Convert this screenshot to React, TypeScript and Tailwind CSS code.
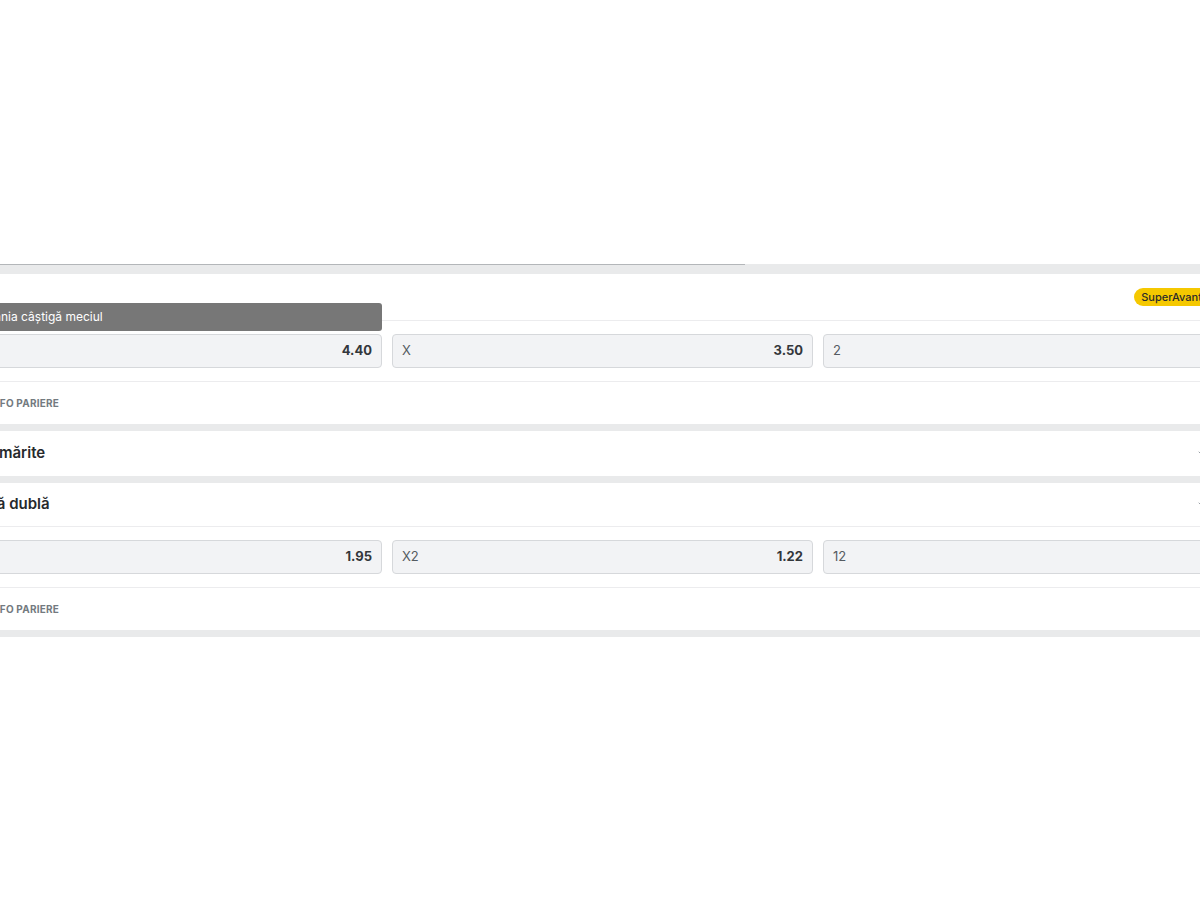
import { ChevronDown, Info } from "lucide-react";

type Odd = { label: string; value: string };

function OddButton({ odd }: { odd: Odd }) {
  return (
    <button className="flex h-[34px] items-center justify-between rounded-[4px] border border-[#d6d8db] bg-[#f2f3f5] px-[9px] text-[13px]">
      <span className="text-[#555b61]">{odd.label}</span>
      <span className="font-bold text-[#33373b]">{odd.value}</span>
    </button>
  );
}

function MarketCard({
  title,
  odds,
  badge,
  tooltip,
  open = true,
  headerHeight = "h-[43px]",
}: {
  title: string;
  odds?: Odd[];
  badge?: string;
  tooltip?: string;
  open?: boolean;
  headerHeight?: string;
}) {
  return (
    <section className="bg-white">
      <div className={`flex items-center justify-between px-3 ${headerHeight}`}>
        <h3 className="text-[15px] font-semibold text-[#26292c]">{title}</h3>
        <div className="flex items-center">
          {badge && (
            <span className="mr-[26px] rounded-full bg-[#f5c800] px-[7px] py-[1px] text-[11px] font-medium text-[#2b2b2b]">
              {badge}
            </span>
          )}
          {!badge && <ChevronDown size={16} strokeWidth={1.5} className="mr-[33px] text-[#9aa0a6]" />}
        </div>
      </div>
      {open && odds && (
        <>
          <div className="relative border-t border-[#ececee] px-3 pt-[13px] pb-[13px]">
            {tooltip && (
              <div className="absolute bottom-[calc(100%-10px)] left-3 w-[421px] rounded-[3px] bg-[#777777] px-2 py-[5px] text-[12px] text-white">
                {tooltip}
              </div>
            )}
            <div className="grid grid-cols-3 gap-[10px]">
              {odds.map((o) => (
                <OddButton key={o.label} odd={o} />
              ))}
            </div>
          </div>
          <div className="flex h-[43px] items-center gap-3 border-t border-[#ececee] px-3">
            <Info size={16} className="text-[#7c8288]" />
            <span className="text-[10px] font-bold uppercase tracking-[0.2px] text-[#737a80]">
              Info pariere
            </span>
          </div>
        </>
      )}
    </section>
  );
}

export default function App() {
  return (
    <div className="min-h-[900px] overflow-hidden bg-white font-['Inter','Liberation_Sans',sans-serif]">
      <div className="h-[264px] bg-white" />
      <div className="h-[10px] bg-[#e9eaeb]">
        <div className="h-px w-[745px] bg-[#b3b6b9]" />
      </div>
      <div className="-ml-[51px] w-[1307px]">
        <MarketCard
          title=""
          badge="SuperAvantaj"
          tooltip="Romania câștigă meciul"
          headerHeight="h-[46px]"
          odds={[
            { label: "1", value: "4.40" },
            { label: "X", value: "3.50" },
            { label: "2", value: "1.85" },
          ]}
        />
        <div className="h-[7px] bg-[#e9eaeb]" />
        <MarketCard title="Cote mărite" open={false} headerHeight="h-[45px]" />
        <div className="h-[7px] bg-[#e9eaeb]" />
        <MarketCard
          title="Șansă dublă"
          odds={[
            { label: "1X", value: "1.95" },
            { label: "X2", value: "1.22" },
            { label: "12", value: "1.30" },
          ]}
        />
        <div className="h-[7px] bg-[#e9eaeb]" />
      </div>
    </div>
  );
}
